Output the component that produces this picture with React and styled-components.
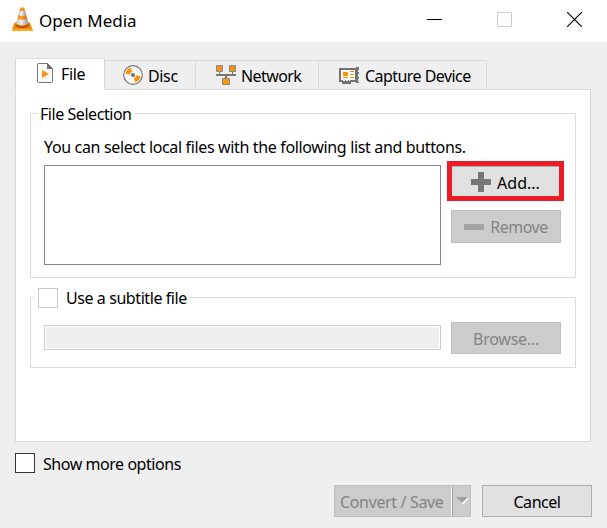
import React from "react";
import styled, { createGlobalStyle } from "styled-components";

const Global = createGlobalStyle`
  *, *::before, *::after { box-sizing: border-box; }
  body { margin: 0; }
  button { padding: 0; margin: 0; font: inherit; color: inherit; text-align: left; }
  svg { display: block; flex: none; }
`;

const Dialog = styled.div`
  width: 607px;
  height: 528px;
  overflow: hidden;
  display: flex;
  flex-direction: column;
  background: #efefef;
  color: #000;
  font-family: "Noto Sans", "Open Sans", sans-serif;
  font-size: 16px;
`;

const Label = styled.span`
  display: block;
  flex: none;
  white-space: nowrap;
  line-height: 20px;
  padding-top: ${(p) => p.$drop || 0}px;
  font-size: ${(p) => p.$size || 16}px;
  letter-spacing: ${(p) => p.$track ?? -0.35}px;
`;

const TitleBar = styled.header`
  flex: none;
  height: 42px;
  padding: 0 0 0 12px;
  background: #fff;
  display: flex;
  align-items: flex-start;
`;

const AppIcon = styled.span`
  flex: none;
  padding-top: 7px;
  width: 27px;
`;

const Title = styled.div`
  flex: 1;
  padding-top: 11px;
`;

const Captions = styled.div`
  flex: none;
  display: flex;
  margin-right: -2px;
`;

const Caption = styled.button`
  width: 70px;
  height: 39px;
  border: 0;
  background: none;
  display: flex;
  align-items: center;
  justify-content: center;
`;

const TabList = styled.div`
  flex: none;
  margin: 16px 16px 0 15px;
  height: 32px;
  display: flex;
  align-items: flex-end;
`;

const Tab = styled.button`
  flex: none;
  width: ${(p) => p.$width}px;
  height: ${(p) => (p.$active ? 32 : 30)}px;
  border: 1px solid #d9d9d9;
  border-left-width: ${(p) => (p.$active ? 1 : 0)}px;
  border-bottom-color: ${(p) => (p.$active ? "#fff" : "#d9d9d9")};
  background: ${(p) => (p.$active ? "#fff" : "#efefef")};
  padding-left: ${(p) => p.$pad}px;
  padding-bottom: ${(p) => (p.$active ? 2 : 0)}px;
  display: flex;
  align-items: center;
  gap: ${(p) => p.$gap}px;
`;

const TabRule = styled.div`
  flex: 1;
  height: 1px;
  background: #d9d9d9;
`;

const Panel = styled.main`
  flex: none;
  margin: 0 16px 0 15px;
  height: 352px;
  padding: 23px 14px 0;
  background: #fff;
  border: 1px solid #d9d9d9;
  border-top: 0;
`;

const Group = styled.section`
  height: ${(p) => p.$height}px;
  margin-bottom: 19px;
  border: 1px solid #dcdcdc;
  padding: 0 14px 0 13px;
`;

const Legend = styled.div`
  width: ${(p) => p.$width}px;
  height: 20px;
  margin: -10px 0 0 ${(p) => p.$left}px;
  padding-left: ${(p) => p.$pad}px;
  background: #fff;
  display: flex;
  align-items: center;
  gap: 8px;
`;

const Hint = styled.div`
  height: 20px;
  margin: 13px 0 8px;
`;

const Row = styled.div`
  display: flex;
  align-items: flex-start;
`;

const FileList = styled.div`
  flex: none;
  width: 397px;
  height: 100px;
  border: 1px solid #828790;
  background: #fff;
`;

const Actions = styled.div`
  flex: none;
  margin: -4px 0 0 6px;
  display: flex;
  flex-direction: column;
  gap: 9px;
`;

const Highlight = styled.div`
  width: 117px;
  height: 40px;
  border: 5px solid #ed1c24;
`;

const Button = styled.button`
  flex: none;
  width: ${(p) => p.$width || 110}px;
  height: ${(p) => p.$height || 32}px;
  border: 1px solid ${(p) => (p.disabled ? "#bfbfbf" : "#adadad")};
  background: ${(p) => (p.disabled ? "#cccccc" : "#e1e1e1")};
  color: ${(p) => (p.disabled ? "#838383" : "#000")};
  display: flex;
  align-items: center;
  justify-content: center;
  gap: 6px;
`;

const AddButton = styled(Button)`
  width: 107px;
  height: 30px;
  border-width: 1px 0 0;
`;

const RemoveButton = styled(Button)`
  margin-left: 4px;
`;

const Check = styled.span`
  flex: none;
  width: 20px;
  height: 20px;
  background: #fff;
  border: 1px solid ${(p) => (p.$muted ? "#cccccc" : "#333")};
`;

const SubtitleRow = styled(Row)`
  margin-top: 14px;
  gap: 10px;
`;

const PathField = styled.div`
  flex: none;
  width: 397px;
  height: 25px;
  margin-top: 3px;
  border: 1px solid #cccccc;
  box-shadow: inset 0 0 0 1px #fff;
  background: #efefef;
`;

const MoreRow = styled.label`
  flex: none;
  height: 20px;
  margin: 11px 0 12px 15px;
  display: flex;
  align-items: center;
  gap: 8px;
`;

const Footer = styled.footer`
  display: flex;
  justify-content: flex-end;
  gap: 11px;
  padding-right: 15px;
`;

const SplitButton = styled(Button)`
  width: 137px;
  justify-content: flex-start;
  gap: 0;
  padding-left: 5px;
`;

const SplitText = styled.span`
  flex: none;
  width: 111px;
`;

const Divider = styled.span`
  width: 2px;
  height: 28px;
  background: linear-gradient(90deg, #fff 50%, #a0a0a0 50%);
  margin-right: 3px;
`;

const ConeIcon = () => (
  <svg width="21" height="24" viewBox="0 0 21 24">
    <defs>
      <linearGradient id="orange">
        <stop offset="0" stopColor="#f58a17" />
        <stop offset=".45" stopColor="#fb9d2c" />
        <stop offset="1" stopColor="#c75e09" />
      </linearGradient>
      <linearGradient id="white">
        <stop offset="0" stopColor="#bfc4c8" />
        <stop offset=".4" stopColor="#eeeeee" />
        <stop offset="1" stopColor="#8f9699" />
      </linearGradient>
    </defs>
    <path d="M2.500 15.500h15.500l2.500 7V24H0v-1.500z" fill="#ed8c12" />
    <path d="M0 22h20.500v2H0z" fill="#faab23" />
    <path d="M3.600 18.500 8.300.700Q10.200-.400 12.200.700L17 18.500Q14.500 21.500 10.300 21.500T3.600 18.500z" fill="url(#orange)" />
    <path d="M7.500 4h5.500l1.300 4.200Q10.300 9.500 6.300 8.200z" fill="url(#white)" />
    <path d="M5.300 12Q10.300 13.500 15.200 12l1.200 4.500Q10.300 19.500 4.200 16.500z" fill="url(#white)" />
    <path d="M3.700 17.500Q10.300 21.100 16.900 17.500L17.300 19Q10.300 23.500 3.300 19z" fill="#bd500b" />
  </svg>
);

const FileIcon = () => (
  <svg width="16" height="20" viewBox="0 0 16 20">
    <path d="M1.500.5H10.500L15.500 5.500V18.500Q15.500 19.500 14.500 19.500H1.500Q.5 19.500.5 18.500V1.500Q.5.500 1.500.500Z" fill="#fafafa" stroke="#777" />
    <path d="M10 0 16 6H10z" fill="#737373" />
    <path d="M5 7v8l7-4z" fill="#ff930c" />
  </svg>
);

const DiscIcon = () => (
  <svg width="20" height="20" viewBox="0 0 20 20">
    <circle cx="10" cy="10" r="9.300" fill="#fafafa" stroke="#777" strokeWidth="1.200" />
    <path d="M10 10 2.500 9Q3 3.500 8 2.700zM10 10l7.500 1Q17 16.500 12 17.300z" fill="#ff930c" />
    <circle cx="10" cy="10" r="3" fill="#fafafa" />
    <circle cx="10" cy="10" r="2" fill="#6e6e6e" />
  </svg>
);

const NetworkIcon = () => (
  <svg width="20" height="20" viewBox="0 0 20 20">
    <path d="M0 9h20v2H0zM3 6h1v4H3zM16 6h1v4h-1zM9 10h2v4H9z" fill="#777" />
    <path d="M.5.500h6v6h-6zM13.500.500h6v6h-6zM6.500 13.500h7v6h-7z" fill="#ff930c" stroke="#878787" />
  </svg>
);

const CaptureIcon = () => (
  <svg width="20" height="18" viewBox="0 0 20 18">
    <path d="M0 2h17V1h3v3h-1v2h1v2h-1v3h1v2h-1v3h1v1h-3v-1h-5v2H3v-2H0z" fill="#737373" />
    <path d="M2 4h14v10H2z" fill="#fafafa" />
    <path d="M4 14h2v1H4zM7 14h2v1H7zM10 14h1v1h-1z" fill="#fafafa" />
    <path d="M4 6h5v4H4zM4 11h5v1H4zM11 5h4v1h-4zM11 8h4v1h-4zM11 11h4v1h-4z" fill="#ff930c" />
  </svg>
);

export default function App() {
  return (
    <>
      <Global />
      <Dialog>
        <TitleBar>
          <AppIcon><ConeIcon /></AppIcon>
          <Title><Label $size={17} $track={0}>Open Media</Label></Title>
          <Captions>
            <Caption aria-label="Minimize">
              <svg width="15" height="15"><path d="M0 7.500h15" stroke="#000" /></svg>
            </Caption>
            <Caption aria-label="Maximize">
              <svg width="15" height="15"><path d="M.5.500h14v14H.5z" fill="none" stroke="#ccc" /></svg>
            </Caption>
            <Caption aria-label="Close">
              <svg width="15" height="15"><path d="m0 0 15 15M15 0 0 15" stroke="#000" strokeWidth="1.100" /></svg>
            </Caption>
          </Captions>
        </TitleBar>
        <TabList role="tablist">
          <Tab $active $width={90} $pad={21} $gap={8}><FileIcon /><Label $drop={2}>File</Label></Tab>
          <Tab $width={91} $pad={18} $gap={5}><DiscIcon /><Label $drop={2}>Disc</Label></Tab>
          <Tab $width={123} $pad={20} $gap={5}><NetworkIcon /><Label $drop={2} $track={-0.6}>Network</Label></Tab>
          <Tab $width={168} $pad={20} $gap={6}><CaptureIcon /><Label $drop={2} $track={-0.55}>Capture Device</Label></Tab>
          <TabRule />
        </TabList>
        <Panel>
          <Group $height={165}>
            <Legend $width={97} $left={-6} $pad={2}><Label $track={-0.45}>File Selection</Label></Legend>
            <Hint><Label>You can select local files with the following list and buttons.</Label></Hint>
            <Row>
              <FileList />
              <Actions>
                <Highlight>
                  <AddButton>
                    <svg width="20" height="20"><path d="M7 0h6v7h7v6h-7v7H7v-7H0V7h7z" fill="#777" /></svg>
                    <Label $drop={2} $track={0}>Add...</Label>
                  </AddButton>
                </Highlight>
                <RemoveButton disabled $height={33}>
                  <svg width="20" height="6"><path d="M0 0h20v6H0z" fill="#a3a3a3" /></svg>
                  <Label $drop={1} $track={-0.45}>Remove</Label>
                </RemoveButton>
              </Actions>
            </Row>
          </Group>
          <Group $height={71}>
            <Legend $width={156} $left={-10} $pad={4}><Check $muted /><Label $track={-0.42}>Use a subtitle file</Label></Legend>
            <SubtitleRow>
              <PathField />
              <Button disabled><Label $drop={2} $track={-0.25}>Browse...</Label></Button>
            </SubtitleRow>
          </Group>
        </Panel>
        <MoreRow><Check /><Label $drop={2} $track={-0.45}>Show more options</Label></MoreRow>
        <Footer>
          <SplitButton disabled>
            <SplitText><Label $drop={2}>Convert / Save</Label></SplitText>
            <Divider />
            <svg width="13" height="8"><path d="m6 7 6-6" stroke="#fff" strokeWidth="2" /><path d="M0 0h12L6 6z" fill="#a0a0a0" /></svg>
          </SplitButton>
          <Button><Label $drop={2} $track={-0.45}>Cancel</Label></Button>
        </Footer>
      </Dialog>
    </>
  );
}
